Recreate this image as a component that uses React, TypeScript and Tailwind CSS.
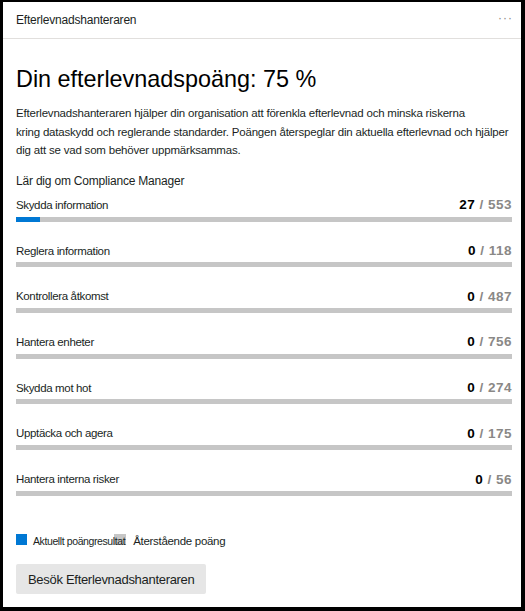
const rows = [
  { label: "Skydda information", score: 27, total: 553 },
  { label: "Reglera information", score: 0, total: 118 },
  { label: "Kontrollera åtkomst", score: 0, total: 487 },
  { label: "Hantera enheter", score: 0, total: 756 },
  { label: "Skydda mot hot", score: 0, total: 274 },
  { label: "Upptäcka och agera", score: 0, total: 175 },
  { label: "Hantera interna risker", score: 0, total: 56 },
];

function ScoreRow({ label, score, total }: { label: string; score: number; total: number }) {
  return (
    <div className="mb-[20.7px]">
      <div className="flex items-center justify-between h-[18px]">
        <span className="text-[11.5px] tracking-[-0.35px] text-[#201f1e]">{label}</span>
        <span className="text-[13.5px] tracking-[0.5px]">
          <span className="font-bold text-black">{score}</span>
          <span className="text-[#8a8886] font-semibold"> / {total}</span>
        </span>
      </div>
      <div className="mt-[2px] h-[5px] bg-[#c6c6c6]">
        <div className="h-full bg-[#0078d4]" style={{ width: `${(score / total) * 100}%` }} />
      </div>
    </div>
  );
}

export default function App() {
  return (
    <div
      className="w-[525px] h-[611px] bg-white border-black border-t-2 border-l-[3px] border-r-4 border-b-4 flex flex-col text-[#201f1e]"
      style={{ fontFamily: '"Liberation Sans", Arial, sans-serif' }}
    >
      <div className="h-[37px] shrink-0 flex items-center justify-between pl-[13px] pr-[8px] border-b border-[#e1dfdd]">
        <span className="text-[12px] tracking-[-0.2px] text-[#201f1e]">Efterlevnadshanteraren</span>
        <span className="text-[12px] text-[#8a8886] tracking-[1px] -mt-[4px]">···</span>
      </div>
      <div className="pl-[13px] pr-[9px] flex-1 flex flex-col">
        <h1 className="mt-[26px] text-[23.4px] leading-[28px] text-black">Din efterlevnadspoäng: 75 %</h1>
        <p className="mt-[11px] text-[11.5px] leading-[18.5px] text-[#201f1e] tracking-[-0.2px]">
          Efterlevnadshanteraren hjälper din organisation att förenkla efterlevnad och minska riskerna
          <br />
          kring dataskydd och reglerande standarder. Poängen återspeglar din aktuella efterlevnad och hjälper
          <br />
          dig att se vad som behöver uppmärksammas.
        </p>
        <div className="mt-[12px] text-[12px] leading-[18px] tracking-[-0.2px]">Lär dig om Compliance Manager</div>
        <div className="mt-[7px]">
          {rows.map((r) => (
            <ScoreRow key={r.label} {...r} />
          ))}
        </div>
        <div className="mt-[18px] flex items-center leading-[14px]">
          <span className="w-[11px] h-[11px] bg-[#0078d4] mr-[6px] -mt-[3px] shrink-0" />
          <span className="relative z-10 text-[10.5px] tracking-[-0.4px]">Aktuellt poängresultat</span>
          <span className="w-[12px] h-[11px] bg-[#c6c6c6] -ml-[11px] -mt-[3px] mr-[7px] shrink-0" />
          <span className="text-[11.5px] tracking-[-0.3px]">Återstående poäng</span>
        </div>
        <button className="mt-[16px] w-[190px] h-[30px] bg-[#e6e6e6] rounded-[2px] text-[13px] tracking-[-0.3px] text-left pl-[12px] text-[#201f1e]">
          Besök Efterlevnadshanteraren
        </button>
      </div>
    </div>
  );
}
